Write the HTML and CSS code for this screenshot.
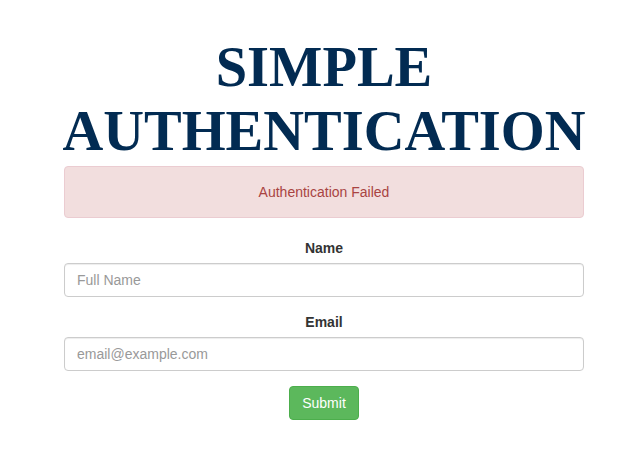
FILE: index.html
```html
<!DOCTYPE html>
<html>
<head>
<meta charset="utf-8">
<link rel="stylesheet" href="styles.css">
</head>
<body>
<div class="wrap">
  <h1 class="title">SIMPLE AUTHENTICATION</h1>
  <div class="alert">Authentication Failed</div>
  <form class="form">
    <div class="group">
      <label class="label" for="name">Name</label>
      <input class="control" id="name" type="text" placeholder="Full Name">
    </div>
    <div class="group">
      <label class="label" for="email">Email</label>
      <input class="control" id="email" type="email" placeholder="email@example.com">
    </div>
    <div class="actions">
      <button class="btn" type="button">Submit</button>
    </div>
  </form>
</div>
</body>
</html>
```
FILE: styles.css
```css
* { box-sizing: border-box; }
html, body { margin: 0; padding: 0; background: #fff; }
body {
  font-family: "Liberation Sans", Arial, sans-serif;
  font-size: 14px;
  line-height: 20px;
  color: #333;
}
.wrap {
  width: 520px;
  margin-left: 64px;
  padding-top: 1px;
}
.title {
  font-family: "Liberation Serif", "Times New Roman", serif;
  font-weight: bold;
  font-size: 56.5px;
  line-height: 64px;
  color: #022b52;
  text-align: center;
  margin: 34px -10px 3px;
}
.alert {
  background: #f2dede;
  border: 1px solid #ebccd1;
  color: #a94442;
  border-radius: 4px;
  padding: 15px;
  text-align: center;
  margin-bottom: 20px;
}
.group {
  margin-bottom: 15px;
  display: flex;
  flex-direction: column;
}
.label {
  font-weight: bold;
  text-align: center;
  margin-bottom: 5px;
}
.control {
  display: block;
  width: 100%;
  height: 34px;
  padding: 6px 12px;
  font-family: inherit;
  font-size: 14px;
  color: #555;
  border: 1px solid #ccc;
  border-radius: 4px;
  box-shadow: inset 0 1px 1px rgba(0,0,0,.075);
  background: #fff;
}
.control::placeholder { color: #999; }
.actions { text-align: center; }
.btn {
  font-family: inherit;
  font-size: 14px;
  line-height: 20px;
  padding: 6px 12px;
  color: #fff;
  background: #5cb85c;
  border: 1px solid #4cae4c;
  border-radius: 4px;
}
```
